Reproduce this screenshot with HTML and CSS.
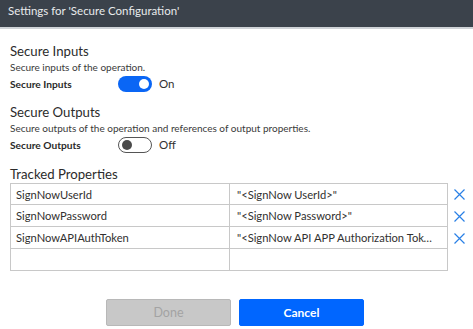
FILE: index.html
```html
<!DOCTYPE html>
<html lang="en">
<head>
<meta charset="utf-8">
<title>Settings</title>
<link rel="stylesheet" href="styles.css">
</head>
<body>
<header class="titlebar">Settings for 'Secure Configuration'</header>
<main class="content">
  <section class="group">
    <h2 class="group-title">Secure Inputs</h2>
    <p class="group-desc">Secure inputs of the operation.</p>
    <div class="toggle-row">
      <span class="toggle-label">Secure Inputs</span>
      <span class="toggle toggle-on"><span class="knob"></span></span>
      <span class="toggle-state">On</span>
    </div>
  </section>
  <section class="group">
    <h2 class="group-title">Secure Outputs</h2>
    <p class="group-desc">Secure outputs of the operation and references of output properties.</p>
    <div class="toggle-row">
      <span class="toggle-label">Secure Outputs</span>
      <span class="toggle toggle-off"><span class="knob"></span></span>
      <span class="toggle-state">Off</span>
    </div>
  </section>
  <section class="tracked">
    <h2 class="group-title">Tracked Properties</h2>
    <div class="prop-grid">
      <div class="cell key">SignNowUserId</div>
      <div class="cell val">"&lt;SignNow UserId&gt;"</div>
      <div class="remove"><svg viewBox="0 0 11 11" width="11" height="11"><path d="M0.5 0.5L10.5 10.5M10.5 0.5L0.5 10.5" /></svg></div>

      <div class="cell key">SignNowPassword</div>
      <div class="cell val">"&lt;SignNow Password&gt;"</div>
      <div class="remove"><svg viewBox="0 0 11 11" width="11" height="11"><path d="M0.5 0.5L10.5 10.5M10.5 0.5L0.5 10.5" /></svg></div>

      <div class="cell key">SignNowAPIAuthToken</div>
      <div class="cell val">"&lt;SignNow API APP Authorization Token&gt;"</div>
      <div class="remove"><svg viewBox="0 0 11 11" width="11" height="11"><path d="M0.5 0.5L10.5 10.5M10.5 0.5L0.5 10.5" /></svg></div>

      <div class="cell key"></div>
      <div class="cell val"></div>
      <div class="remove"></div>
    </div>
  </section>
  <div class="actions">
    <button class="btn btn-done" disabled>Done</button>
    <button class="btn btn-cancel">Cancel</button>
  </div>
</main>
</body>
</html>
```
FILE: styles.css
```css
* { box-sizing: border-box; }
html, body { margin: 0; padding: 0; background: #fff; }
body {
  width: 473px;
  height: 329px;
  overflow: hidden;
  font-family: "Lato", "Open Sans", sans-serif;
  color: #323130;
}
.titlebar {
  height: 29px;
  background: #3b424b;
  border-bottom: 2px solid #cfd3d7;
  color: #e8eaec;
  font-size: 11.5px;
  line-height: 21px;
  padding-left: 8px;
}
.content {
  padding: 14px 0 0 10px;
}
.group { margin-bottom: 11px; }
.group-title {
  margin: 0;
  font-size: 13.2px;
  font-weight: 400;
  line-height: 17px;
  color: #2b2b2b;
}
.group-desc {
  margin: 0;
  font-size: 10px;
  line-height: 14px;
  color: #3a3a3a;
}
.toggle-row {
  display: flex;
  align-items: center;
  height: 19px;
}
.toggle-label {
  width: 108px;
  font-size: 10.2px;
  font-weight: 700;
  color: #2a2a2a;
}
.toggle {
  width: 34px;
  height: 16px;
  border-radius: 8px;
  display: flex;
  align-items: center;
  padding: 0 3px;
}
.toggle-on { background: #0a66f5; justify-content: flex-end; }
.toggle-off { border: 1px solid #555; justify-content: flex-start; }
.knob { width: 10px; height: 10px; border-radius: 50%; }
.toggle-on .knob { background: #fff; }
.toggle-off .knob { background: #4a4a4a; }
.toggle-state { margin-left: 7px; font-size: 11.5px; }
.tracked .group-title { line-height: 18px; }
.prop-grid {
  display: grid;
  grid-template-columns: 220px 218px 20px;
  grid-auto-rows: 22px;
}
.cell {
  border: 1px solid #c8c8c8;
  border-top: none;
  font-size: 11.2px;
  line-height: 21px;
  padding-left: 5px;
  white-space: nowrap;
  overflow: hidden;
  text-overflow: ellipsis;
}
.prop-grid > .cell:nth-child(-n+2) { border-top: 1px solid #c8c8c8; }
.cell.val { border-left: none; padding-left: 7px; padding-right: 13px; }
.remove {
  display: flex;
  align-items: center;
  justify-content: flex-end;
  padding-right: 3px;
}
.remove svg { display: block; }
.remove path { stroke: #2a80e6; stroke-width: 1.2; fill: none; }
.actions {
  display: flex;
  justify-content: center;
  gap: 8px;
  margin-top: 28px;
  margin-left: -13px;
}
.btn {
  width: 125px;
  height: 27px;
  border-radius: 2px;
  font-family: "Lato", "Open Sans", sans-serif;
  font-size: 12px;
  font-weight: 700;
}
.btn-done { background: #c8c8c8; border: 1px solid #b8b8b8; color: #a3a3a3; font-weight: 400; font-size: 12.5px; }
.btn-cancel { background: #0066ff; border: 1px solid #0066ff; color: #fff; }
```
